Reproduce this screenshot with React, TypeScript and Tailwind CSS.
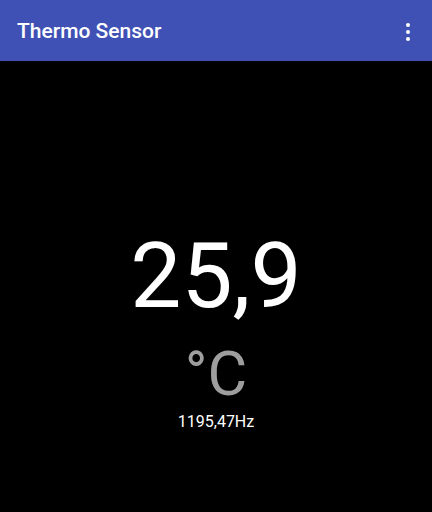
export default function App() {
  return (
    <div className="flex h-[512px] w-[432px] flex-col bg-black font-['Roboto',sans-serif]">
      <div className="flex h-[61px] shrink-0 items-center justify-between bg-[#3f51b5] pl-[17px] pr-[12px] pt-[3px] shadow-[0_2px_4px_rgba(0,0,0,0.5)]">
        <h1 className="text-[21px] font-medium text-white">Thermo Sensor</h1>
        <svg width="24" height="24" viewBox="0 0 24 24" fill="white">
          <circle cx="12" cy="5" r="2" />
          <circle cx="12" cy="12" r="2" />
          <circle cx="12" cy="19" r="2" />
        </svg>
      </div>
      <div className="flex flex-1 flex-col items-center pt-[170px]">
        <div className="text-[91px] leading-none text-white">25,9</div>
        <div className="mt-[22px] text-[61px] leading-none text-[#9e9e9e]">°C</div>
        <div className="mt-[9px] text-[16px] leading-none text-white">1195,47Hz</div>
      </div>
    </div>
  );
}
